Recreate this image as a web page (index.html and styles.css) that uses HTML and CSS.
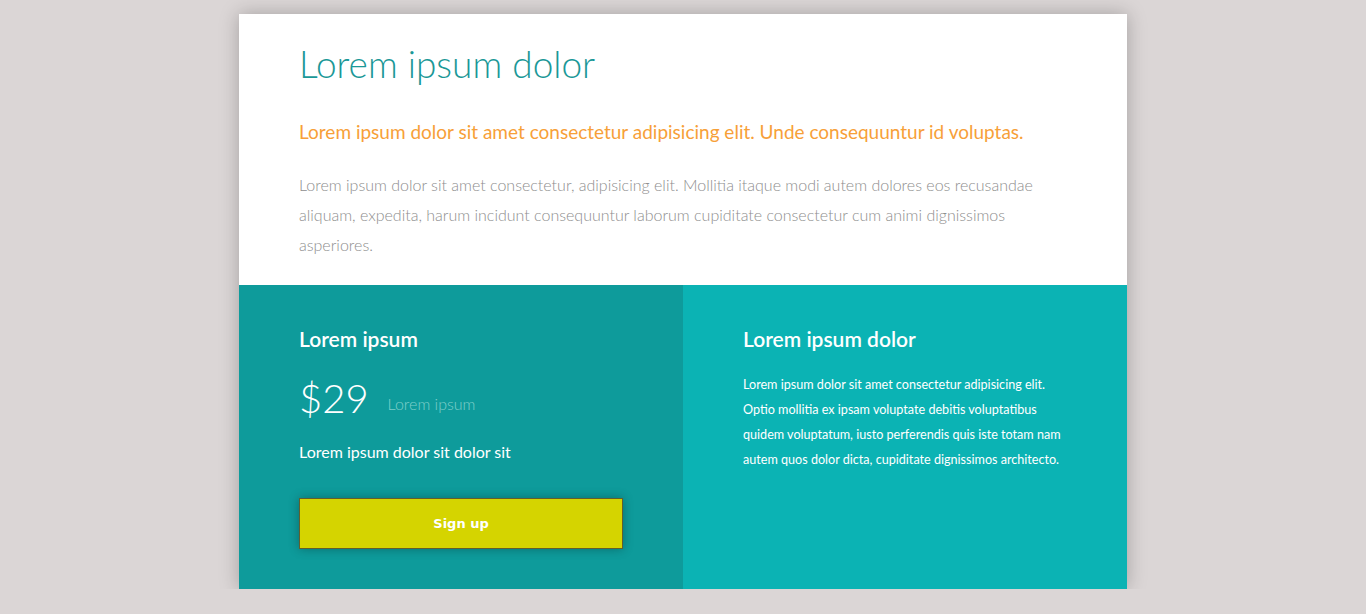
FILE: index.html
```html
<!DOCTYPE html>
<html lang="en">
<head>
<meta charset="utf-8">
<title>Pricing</title>
<link rel="stylesheet" href="styles.css">
</head>
<body>
<main class="card">
  <section class="intro">
    <h1 class="title">Lorem ipsum dolor</h1>
    <p class="lead">Lorem ipsum dolor sit amet consectetur adipisicing elit. Unde consequuntur id voluptas.</p>
    <p class="text">Lorem ipsum dolor sit amet consectetur, adipisicing elit. Mollitia itaque modi autem dolores eos recusandae aliquam, expedita, harum incidunt consequuntur laborum cupiditate consectetur cum animi dignissimos asperiores.</p>
  </section>
  <section class="bottom">
    <div class="plan">
      <h2 class="subhead">Lorem ipsum</h2>
      <div class="price-row">
        <span class="price">$29</span>
        <span class="price-note">Lorem ipsum</span>
      </div>
      <p class="plan-desc">Lorem ipsum dolor sit dolor sit</p>
      <button class="signup">Sign up</button>
    </div>
    <div class="about">
      <h2 class="subhead">Lorem ipsum dolor</h2>
      <p class="about-text">Lorem ipsum dolor sit amet consectetur adipisicing elit. Optio mollitia ex ipsam voluptate debitis voluptatibus quidem voluptatum, iusto perferendis quis iste totam nam autem quos dolor dicta, cupiditate dignissimos architecto.</p>
    </div>
  </section>
</main>
</body>
</html>
```
FILE: styles.css
```css
* { box-sizing: border-box; }
html, body { margin: 0; padding: 0; }
body {
  background: #dbd6d6;
  font-family: "Lato", "Open Sans", sans-serif;
  padding-top: 14px;
}
.card {
  width: 888px;
  margin: 0 auto;
  background: #fff;
  box-shadow: 0 0 18px rgba(0,0,0,0.25);
}
.intro {
  padding: 25px 60px 25px;
}
.title {
  margin: 0;
  font-size: 37px;
  font-weight: 300;
  line-height: 50px;
  color: #1b9897;
}
.lead {
  margin: 29px 0 0;
  font-size: 19px;
  line-height: 28px;
  color: #f7a038;
}
.text {
  margin: 24px 0 0;
  font-size: 16px;
  line-height: 30px;
  font-weight: 300;
  color: #8e8e8e;
}
.bottom {
  display: grid;
  grid-template-columns: 1fr 1fr;
  height: 304px;
}
.plan, .about {
  padding: 39px 60px 40px;
  color: #fff;
}
.plan { background: #0e9b9b; }
.about { background: #0bb3b4; }
.subhead {
  margin: 0;
  font-size: 21px;
  line-height: 30px;
  font-weight: 600;
}
.price-row {
  display: flex;
  align-items: baseline;
  gap: 19px;
  margin-top: 19px;
}
.price {
  font-size: 40px;
  font-weight: 300;
  line-height: 50px;
}
.price-note {
  font-size: 16px;
  font-weight: 300;
  color: #7fcfca;
  position: relative;
  top: -3px;
}
.plan-desc {
  margin: 17px 0 0;
  font-size: 16px;
  line-height: 24px;
  font-weight: 400;
}
.signup {
  display: block;
  margin-top: 34px;
  width: 324px;
  height: 51px;
  background: #d5d400;
  border: 1px solid #625e2c;
  box-shadow: 0 0 10px rgba(0,0,0,0.3);
  color: #fff;
  font-family: "DejaVu Sans", "Liberation Sans", sans-serif;
  font-weight: 700;
  font-size: 13px;
  cursor: pointer;
}
.about-text {
  margin: 18px 0 0;
  font-size: 12.6px;
  line-height: 25px;
}
```
